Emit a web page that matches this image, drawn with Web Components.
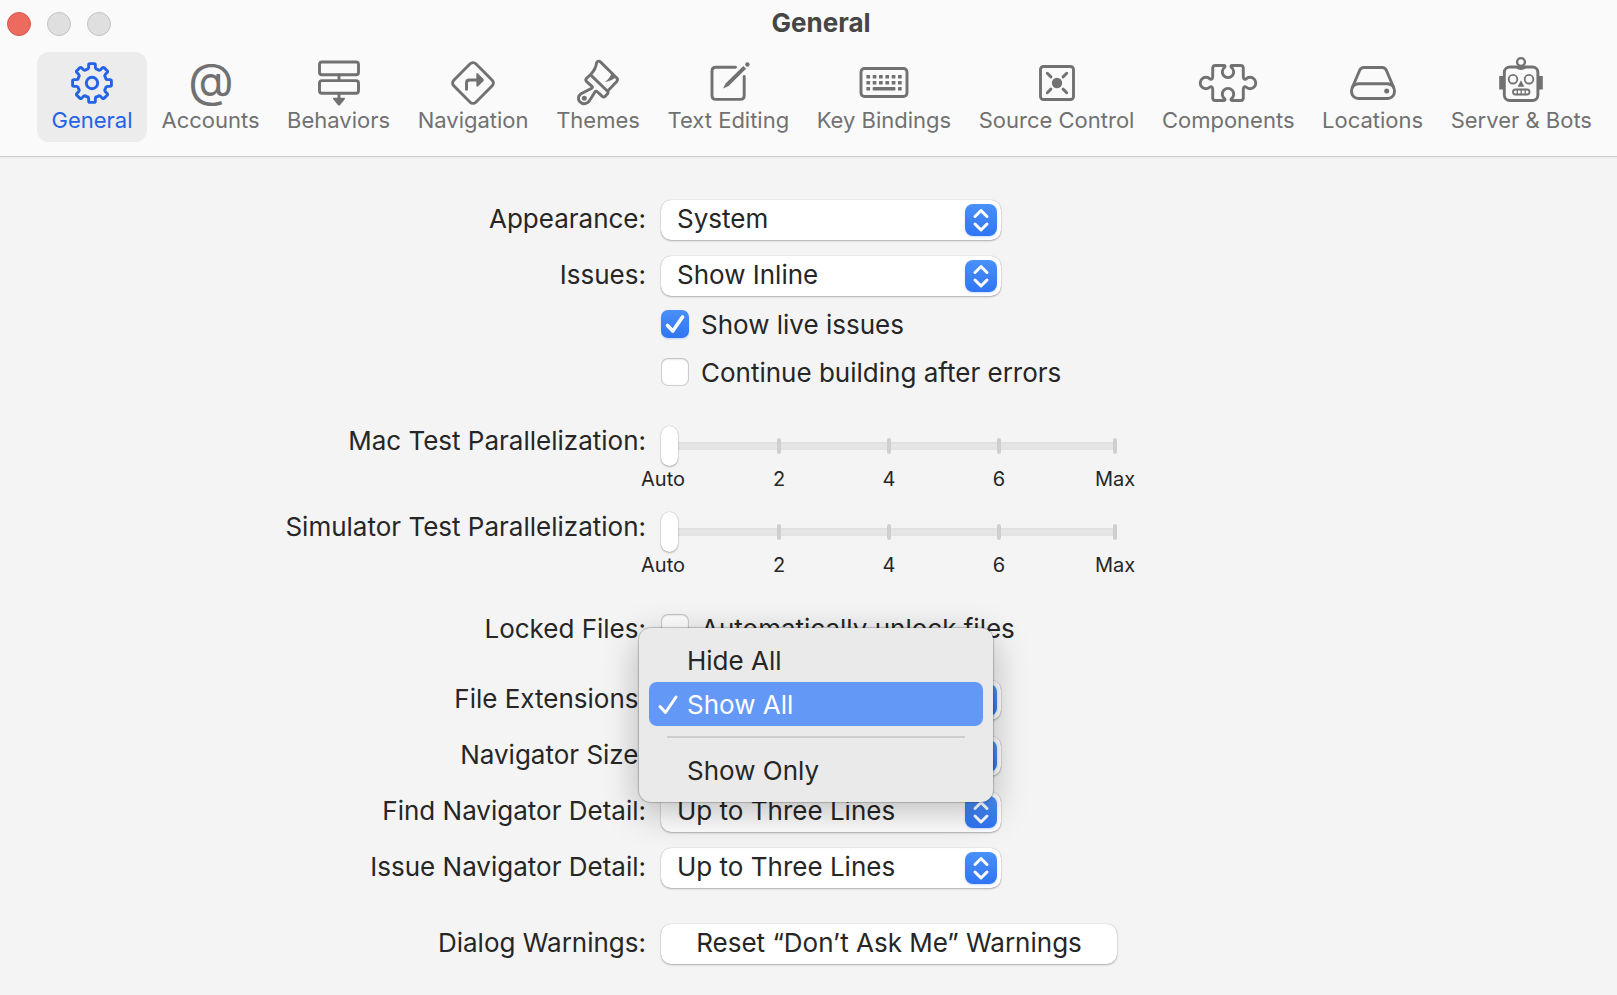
<!DOCTYPE html>
<html lang="en">
<head>
<meta charset="utf-8">
<meta name="viewport" content="width=device-width, initial-scale=1">
<title>General</title>
<style>
  html, body { margin: 0; min-height: 100%; }
  body { background: #f4f4f4; font-family: Inter, "Liberation Sans", sans-serif; color: #262626; }
</style>
</head>
<body>
<prefs-window heading="General">
  <prefs-tab slot="tabs" icon="gear" selected>General</prefs-tab>
  <prefs-tab slot="tabs" icon="at">Accounts</prefs-tab>
  <prefs-tab slot="tabs" icon="behaviors">Behaviors</prefs-tab>
  <prefs-tab slot="tabs" icon="navigation">Navigation</prefs-tab>
  <prefs-tab slot="tabs" icon="brush">Themes</prefs-tab>
  <prefs-tab slot="tabs" icon="edit">Text Editing</prefs-tab>
  <prefs-tab slot="tabs" icon="keyboard">Key Bindings</prefs-tab>
  <prefs-tab slot="tabs" icon="source">Source Control</prefs-tab>
  <prefs-tab slot="tabs" icon="puzzle">Components</prefs-tab>
  <prefs-tab slot="tabs" icon="disk">Locations</prefs-tab>
  <prefs-tab slot="tabs" icon="robot">Server &amp; Bots</prefs-tab>

  <prefs-group>
    <prefs-popup value="System">Appearance:</prefs-popup>
    <prefs-popup value="Show Inline">Issues:</prefs-popup>
    <prefs-check checked>Show live issues</prefs-check>
    <prefs-check>Continue building after errors</prefs-check>
  </prefs-group>
  <prefs-group loose>
    <prefs-slider>Mac Test Parallelization:</prefs-slider>
    <prefs-slider>Simulator Test Parallelization:</prefs-slider>
  </prefs-group>
  <prefs-group>
    <prefs-check><span slot="label">Locked Files:</span>Automatically unlock files</prefs-check>
  </prefs-group>
  <prefs-group>
    <prefs-popup value="Show All">File Extensions:
      <prefs-menu slot="menu">
        <prefs-menu-item>Hide All</prefs-menu-item>
        <prefs-menu-item selected>Show All</prefs-menu-item>
        <prefs-separator></prefs-separator>
        <prefs-menu-item>Show Only</prefs-menu-item>
      </prefs-menu>
    </prefs-popup>
    <prefs-popup value="Medium">Navigator Size:</prefs-popup>
    <prefs-popup value="Up to Three Lines">Find Navigator Detail:</prefs-popup>
    <prefs-popup value="Up to Three Lines">Issue Navigator Detail:</prefs-popup>
  </prefs-group>
  <prefs-group>
    <prefs-action><span slot="label">Dialog Warnings:</span>Reset “Don’t Ask Me” Warnings</prefs-action>
  </prefs-group>
</prefs-window>

<script>
// Eight-toothed gear outline centred on (30, 27).
function gearPath() {
  const at = (r, deg) => {
    const a = deg * Math.PI / 180;
    return (30 + r * Math.sin(a)).toFixed(2) + ' ' + (27 - r * Math.cos(a)).toFixed(2);
  };
  let d = '';
  for (let k = 0; k < 8; k++) {
    const a = k * 45;
    d += (k ? 'L' : 'M') + at(16, a - 12) + 'L' + at(18.4, a - 10.5) +
      'Q' + at(19.8, a - 9.5) + ' ' + at(19.5, a - 6) + 'L' + at(19.5, a + 6) +
      'Q' + at(19.8, a + 9.5) + ' ' + at(18.4, a + 10.5) + 'L' + at(16, a + 12) +
      'Q' + at(14.2, a + 15) + ' ' + at(14.6, a + 19) +
      'L' + at(14.6, a + 26) + 'Q' + at(14.2, a + 30) + ' ' + at(16, a + 33);
  }
  return d + 'Z';
}

const keys = [];
for (const y of [19, 25, 31])
  for (const x of [12.4, 18.7, 25, 31.4, 37.7, 44])
    if (y < 31 || x < 13 || x > 43) keys.push(`<rect x="${x}" y="${y}" width="3.7" height="3.5" rx=".6"/>`);

const ICONS = {
  gear: `<path d="${gearPath()}"/><circle cx="30" cy="27" r="5.7"/>`,
  at: `<text x="30" y="41" text-anchor="middle" font-size="47" fill="currentColor" stroke="none">@</text>`,
  behaviors: `<rect x="10.5" y="6" width="39" height="12.7" rx="2.5"/><rect x="10.5" y="24.6" width="39" height="12.7" rx="2.5"/>
    <path d="M30 19v5M30 38v5"/><path class="f" d="M24.4 41.8h11.2q.8.6.2 1.4l-4.9 6q-.9.9-1.8 0l-4.9-6q-.6-.8.2-1.4z"/>`,
  navigation: `<rect x="14.4" y="11.4" width="31.2" height="31.2" rx="4" transform="rotate(45 30 27)"/>
    <path d="M23.5 33.4V27q0-3 3-3H34"/><path class="f" d="M33.4 18.2q0-1.7 1.5-.8l5.6 5.6q.8 1 0 2l-5.6 5.4q-1.5.9-1.5-.8z"/>`,
  brush: `<path d="M22.600 18.500Q27.700 13.500 28.600 6.800Q30.200 4 32.400 5.900L48.800 22Q50.200 23.800 48.800 25.500L40.400 34.200"/>
    <path d="M21.200 19.800L18.400 22.500Q17.200 23.900 18.400 25.300L24 30.300Q25 31.500 23.600 32.400L13 37.700Q8.700 41.300 11.600 45.600Q15.300 49.600 20 46.400Q21.300 45.200 26.900 35.900Q27.900 34.500 29.300 35.800L34.300 40.400Q35.800 41.700 37.100 40.400L39.500 37.800Q40.600 36.300 39.300 35L23.600 19.900Q22.400 18.700 21.200 19.800Z"/>
    <circle class="f" cx="16.300" cy="42.300" r="2.500"/><path class="f" d="M43.500 15.500L48.500 20.500Q44.500 24.700 36.600 26.200Q43.500 21.400 43.500 15.500z"/>`,
  edit: `<path d="M37.500 11.200H18q-4 0-4 4v24.200q0 4 4 4h24.200q4 0 4-4V20.500"/>
    <path class="f" d="M25 32.600l2.800-5.300L45.300 10l2.800 2.800-17.500 17.300z"/><circle class="f" cx="49.400" cy="8.500" r="2.200"/>`,
  keyboard: `<rect x="7" y="12.500" width="46" height="28" rx="3.500"/><g class="f">${keys.join('')}<rect x="18.700" y="31" width="22.700" height="3.500" rx=".8"/></g>`,
  source: `<rect x="13.500" y="10.500" width="33" height="33" rx="3"/><circle class="f" cx="30" cy="27" r="5.200"/>
    <path d="M20.300 17.300l3.600 3.600M39.700 17.300l-3.600 3.600M20.300 36.700l3.600-3.600M39.700 36.700l-3.600-3.600"/>`,
  puzzle: `<path d="M17.500 9.500H26Q27.800 9.900 26.600 11.400A5.700 5.700 0 1 0 33.400 11.400Q32.200 9.900 34 9.500H42.500Q45.300 9.500 45.300 12.300V20.500Q45.600 24.300 48 23A5.700 5.700 0 1 1 48 31Q45.600 29.700 45.300 33.500V41.700Q45.300 44.500 42.500 44.500H34Q32.200 44.100 33.400 42.600A5.700 5.700 0 1 0 26.600 42.600Q27.800 44.100 26 44.500H17.500Q14.700 44.500 14.700 41.700V33.500Q14.400 29.700 12 31A5.700 5.700 0 1 1 12 23Q14.400 24.300 14.700 20.500V12.300Q14.700 9.500 17.500 9.500Z"/>`,
  disk: `<rect x="8.500" y="27.700" width="43" height="14.800" rx="7"/><path d="M9.300 31.500L16.700 14.200Q18 11.500 20.800 11.500H39.200Q42 11.500 43.300 14.200L50.700 31.500"/><circle class="f" cx="43.700" cy="35" r="2.500"/>`,
  robot: `<rect x="13.300" y="11" width="33.600" height="33.500" rx="5.500"/><circle cx="30" cy="6" r="3.900" stroke-width="2.400"/>
    <path class="f" d="M25.500 10h9.200l.8 1.500q-2 2.600-5.400 2.600t-5.400-2.600zM8.200 20h4.500v13.400H8.200zM47.300 20h4.500v13.400h-4.500zM30 24.200l3.400 6.500h-6.800z"/>
    <g stroke-width="1.800"><circle cx="22" cy="23.200" r="4.300"/><circle cx="38" cy="23.200" r="4.300"/><rect x="22" y="33.500" width="16.500" height="5" rx="2.500"/></g>
    <path stroke-width="1.300" d="M26.300 33.500v5M30.200 33.500v5M34.200 33.500v5"/>`
};

function define(name, html, setup) {
  const template = document.createElement('template');
  template.innerHTML = html;
  customElements.define(name, class extends HTMLElement {
    constructor() {
      super();
      this.attachShadow({ mode: 'open' }).append(template.content.cloneNode(true));
    }
    connectedCallback() {
      if (setup && !this.ready) { this.ready = true; setup(this, this.shadowRoot); }
    }
  });
}

const ROW = `
  :host { display: grid; grid-template-columns: 1fr 1fr; font-size: 26px; line-height: 38px; }
  .label { text-align: right; padding-right: 15px; white-space: nowrap; }
  input, select, button { font: inherit; color: inherit; margin: 0; border: 0; box-sizing: border-box; }
`;

define('prefs-window', `
  <style>
    :host { display: block; }
    header { background: #fafafa; border-bottom: 1px solid #cfcfcf; box-shadow: 0 1px 1px #ececec; padding: 8px 12px 14px 37px; }
    .bar { display: grid; grid-template-columns: 1fr auto 1fr; align-items: center; height: 32px; margin: 0 10px 12px -30px; }
    .lights { display: flex; gap: 16px; }
    .lights button { width: 24px; height: 24px; padding: 0; border-radius: 50%; border: 1px solid #c4c4c4; background: #dfdfdf; }
    .lights .close { background: #ed6a5f; border-color: #d9584d; }
    h1 { margin: 0; font-size: 26px; line-height: 30px; font-weight: 700; color: #464646; padding: 0 0 2px 40px; }
    nav { display: flex; justify-content: space-between; }
    main { display: flex; flex-direction: column; gap: 36px; padding: 43px 295px 31px 0; }
  </style>
  <header>
    <div class="bar">
      <div class="lights"><button class="close" aria-label="Close"></button><button aria-label="Minimize"></button><button aria-label="Zoom"></button></div>
      <h1></h1>
    </div>
    <nav><slot name="tabs"></slot></nav>
  </header>
  <main><slot></slot></main>
`, (el, root) => { root.querySelector('h1').textContent = el.getAttribute('heading'); });

define('prefs-tab', `
  <style>
    :host { display: block; }
    button { display: flex; flex-direction: column; align-items: center; box-sizing: border-box; min-width: 110px; padding: 4px 13px 10px;
      border: 0; border-radius: 12px; background: none; color: #717171; font: 22px/24px Inter, "Liberation Sans", sans-serif; white-space: nowrap; }
    :host([selected]) button { background: #ececec; color: #2462e8; }
    svg { width: 60px; height: 52px; overflow: visible; fill: none; stroke: currentColor; stroke-width: 2.900; stroke-linecap: round; stroke-linejoin: round; }
    .f { fill: currentColor; stroke: none; }
  </style>
  <button type="button"><svg viewBox="0 0 60 52" aria-hidden="true"></svg><span><slot></slot></span></button>
`, (el, root) => { root.querySelector('svg').innerHTML = ICONS[el.getAttribute('icon')]; });

define('prefs-group', `
  <style>
    :host { display: flex; flex-direction: column; gap: 16px; }
    :host([loose]) { gap: 18px; }
  </style>
  <slot></slot>
`);

define('prefs-popup', `
  <style>${ROW}
    .control { display: grid; position: relative; width: 340px; height: 40px; }
    select { grid-area: 1 / 1; appearance: none; height: 40px; padding: 0 40px 2px 16px; border-radius: 10px; background: #fff;
      box-shadow: 0 0 1px #0005, 0 1px 2px #0004; line-height: 38px; }
    .arrows { grid-area: 1 / 1; justify-self: end; align-self: center; display: block; width: 32px; height: 32px; margin-right: 4px;
      border-radius: 8px; background: linear-gradient(#4a90f8, #3075f3); box-shadow: 0 1px 2px #3078f444; pointer-events: none; z-index: 0; }
    ::slotted(prefs-menu) { position: absolute; left: -22px; top: -52px; z-index: 10; }
  </style>
  <label class="label" for="c"><slot></slot></label>
  <div class="control">
    <select id="c"><option></option></select>
    <svg class="arrows" viewBox="0 0 32 32" fill="none" stroke="#fff" stroke-width="3" stroke-linecap="round" stroke-linejoin="round" aria-hidden="true"><path d="M10 12.500L16 6.500l6 6M10 20l6 6 6-6"/></svg>
    <slot name="menu"></slot>
  </div>
`, (el, root) => { root.querySelector('option').textContent = el.getAttribute('value'); });

define('prefs-check', `
  <style>${ROW}
    :host { line-height: 30px; }
    :host([checked]) { margin: -2px 0 2px; }
    .control { display: grid; grid-template-columns: 28px auto; column-gap: 12px; justify-content: start; }
    input { grid-area: 1 / 1; appearance: none; width: 28px; height: 28px; border-radius: 7px; background: #fff;
      box-shadow: inset 0 0 1px 1px #0003, inset 0 2px 2px #0001; }
    input:checked { background: linear-gradient(#4a90f8, #3075f3); box-shadow: 0 1px 2px #3078f444; }
    svg { grid-area: 1 / 1; width: 28px; height: 28px; pointer-events: none; visibility: hidden; }
    input:checked + svg { visibility: visible; }
    .control label { grid-area: 1 / 2; white-space: nowrap; }
  </style>
  <div class="label"><slot name="label"></slot></div>
  <div class="control">
    <input type="checkbox" id="c">
    <svg viewBox="0 0 28 28" fill="none" stroke="#fff" stroke-width="3.600" stroke-linecap="round" stroke-linejoin="round" aria-hidden="true"><path d="M6.500 15.500L11.800 21 21.500 7"/></svg>
    <label for="c"><slot></slot></label>
  </div>
`, (el, root) => { root.querySelector('input').checked = el.hasAttribute('checked'); });

define('prefs-slider', `
  <style>${ROW}
    :host { line-height: 30px; padding-top: 2px; }
    .control { display: grid; width: 456px; }
    input { grid-area: 1 / 1; appearance: none; width: 100%; height: 40px; background: linear-gradient(#dedede, #e6e6e6 40%, #e2e2e2) center / 100% 8px no-repeat; }
    input::-webkit-slider-runnable-track { height: 40px; }
    input::-webkit-slider-thumb { appearance: none; width: 17px; height: 40px; border-radius: 9px; background: #fff; box-shadow: 0 0 1px #0005, 0 1px 2px #0004; }
    .ticks { display: grid; grid-area: 1 / 1 / 3; grid-template-columns: 116fr 110fr 110fr 116fr 4px; pointer-events: none; padding: 12px 0 1px; }
    .ticks span { display: flex; flex-direction: column; align-items: center; width: 4px; gap: 13px; font-size: 20px; line-height: 24px; }
    .ticks span::before { content: ""; width: 4px; height: 16px; border-radius: 2px; background: #cfcfcf; }
    .ticks span:first-child::before { visibility: hidden; }
  </style>
  <label class="label" for="c"><slot></slot></label>
  <div class="control">
    <input type="range" id="c" min="0" max="8" step="2" value="0">
    <div class="ticks"><span>Auto</span><span>2</span><span>4</span><span>6</span><span>Max</span></div>
  </div>
`);

define('prefs-action', `
  <style>${ROW}
    button { width: 456px; height: 40px; padding: 0 0 2px; border-radius: 10px; background: #fff; box-shadow: 0 0 1px #0005, 0 1px 2px #0004; }
  </style>
  <div class="label"><slot name="label"></slot></div>
  <button type="button"><slot></slot></button>
`);

define('prefs-menu', `
  <style>
    :host { display: block; box-sizing: border-box; width: 354px; padding: 10px; border-radius: 12px; background: #eaeaea;
      box-shadow: 0 0 1px 1px #0003, 0 10px 36px #0004; }
  </style>
  <div role="menu"><slot></slot></div>
`);

define('prefs-menu-item', `
  <style>
    :host { display: block; }
    button { display: grid; grid-template-columns: 20px 1fr; column-gap: 9px; align-items: center; width: 100%; height: 44px; padding: 2px 9px 0; border: 0; border-radius: 8px;
      background: none; color: #262626; font: 26px/42px Inter, "Liberation Sans", sans-serif; text-align: left; }
    svg { width: 20px; height: 20px; visibility: hidden; }
    :host([selected]) button { background: #6398f6; color: #fff; }
    :host([selected]) svg { visibility: visible; }
  </style>
  <button type="button" role="menuitemradio"><svg viewBox="0 0 20 20" fill="none" stroke="currentColor" stroke-width="3" stroke-linecap="round" stroke-linejoin="round" aria-hidden="true"><path d="M2 11.500l5.500 6L18 2"/></svg><span><slot></slot></span></button>
`);

define('prefs-separator', `
  <style>
    :host { display: block; height: 2px; margin: 10px 18px; background: #cdcdcd; }
  </style>
`);
</script>
</body>
</html>
